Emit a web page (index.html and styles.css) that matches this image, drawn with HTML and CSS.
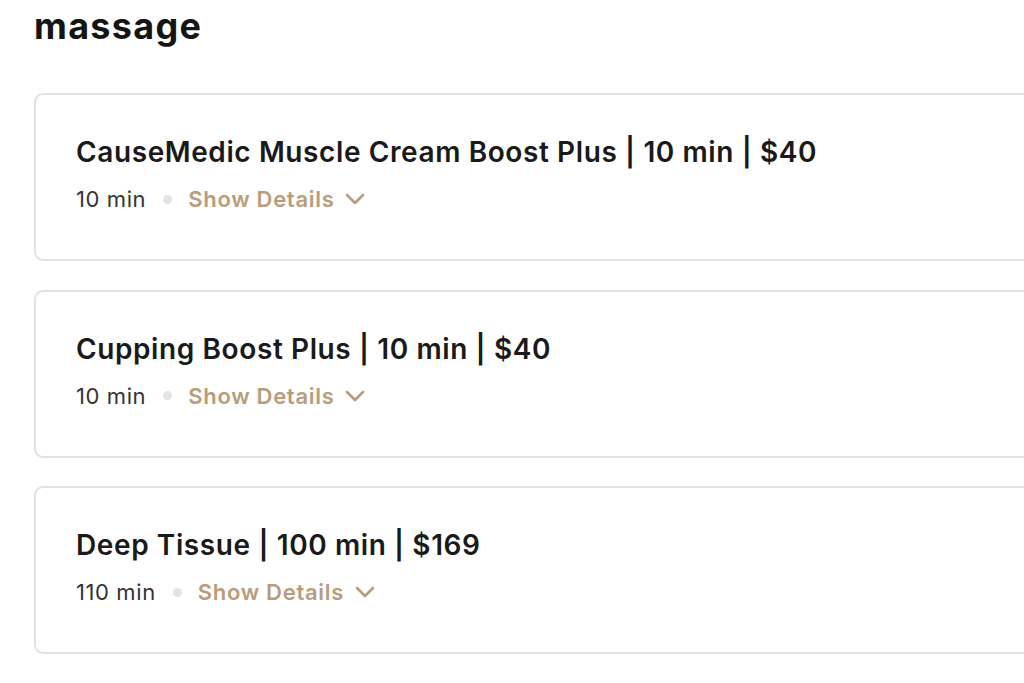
FILE: index.html
```html
<!DOCTYPE html>
<html lang="en">
<head>
<meta charset="utf-8">
<title>massage</title>
<link rel="stylesheet" href="styles.css">
</head>
<body>
<main class="page">
  <h1 class="category">massage</h1>
  <section class="list">
    <article class="card">
      <h2 class="title">CauseMedic Muscle Cream Boost Plus | 10 min | $40</h2>
      <div class="meta">
        <span class="dur">10 min</span>
        <span class="dot"></span>
        <button class="details">Show Details
          <svg class="chev" viewBox="0 0 20 12"><path d="M2 2l8 8 8-8" fill="none" stroke="currentColor" stroke-width="2.6" stroke-linecap="round" stroke-linejoin="round"/></svg>
        </button>
      </div>
    </article>
    <article class="card">
      <h2 class="title">Cupping Boost Plus | 10 min | $40</h2>
      <div class="meta">
        <span class="dur">10 min</span>
        <span class="dot"></span>
        <button class="details">Show Details
          <svg class="chev" viewBox="0 0 20 12"><path d="M2 2l8 8 8-8" fill="none" stroke="currentColor" stroke-width="2.6" stroke-linecap="round" stroke-linejoin="round"/></svg>
        </button>
      </div>
    </article>
    <article class="card">
      <h2 class="title">Deep Tissue | 100 min | $169</h2>
      <div class="meta">
        <span class="dur">110 min</span>
        <span class="dot"></span>
        <button class="details">Show Details
          <svg class="chev" viewBox="0 0 20 12"><path d="M2 2l8 8 8-8" fill="none" stroke="currentColor" stroke-width="2.6" stroke-linecap="round" stroke-linejoin="round"/></svg>
        </button>
      </div>
    </article>
  </section>
</main>
</body>
</html>
```
FILE: styles.css
```css
html, body {
  margin: 0;
  padding: 0;
  background: #ffffff;
  overflow: hidden;
}
body {
  font-family: "Inter", "Noto Sans", sans-serif;
  color: #1b1b1b;
}
.page {
  padding: 0 0 0 34px;
}
.category {
  margin: 0;
  padding-top: 4px;
  font-size: 36px;
  line-height: 44px;
  font-weight: 700;
  letter-spacing: 1.3px;
  color: #151515;
}
.list {
  margin-top: 45px;
  display: flex;
  flex-direction: column;
  gap: 28.5px;
  width: 1040px;
}
.card {
  border: 2px solid #e2e2e2;
  border-radius: 9px;
  height: 168px;
  box-sizing: border-box;
  padding: 39px 40px 0 40px;
}
.title {
  margin: 0;
  font-size: 28px;
  line-height: 36px;
  font-weight: 600;
  letter-spacing: 0.6px;
  color: #1a1a1a;
}
.meta {
  margin-top: 15px;
  display: flex;
  align-items: center;
  font-size: 22px;
  line-height: 28px;
}
.dur {
  color: #333333;
  letter-spacing: 0.6px;
}
.dot {
  width: 9px;
  height: 9px;
  margin: 0 16px 0 17px;
  border-radius: 50%;
  background: #e3e3e3;
}
.details {
  display: inline-flex;
  align-items: center;
  gap: 11px;
  border: 0;
  background: none;
  padding: 0;
  font: inherit;
  font-weight: 600;
  color: #b89c7c;
  letter-spacing: 0.7px;
}
.chev {
  width: 20px;
  height: 12px;
}
```
